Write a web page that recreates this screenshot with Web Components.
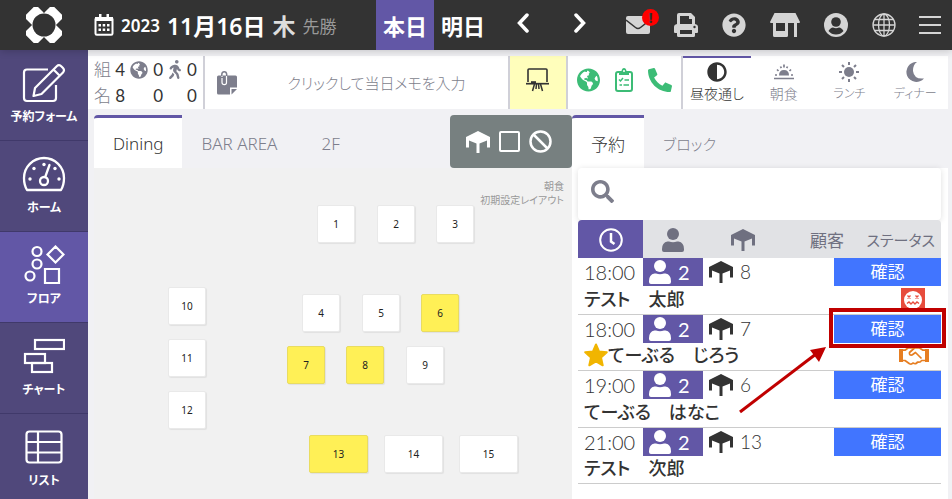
<!DOCTYPE html>
<html lang="ja">
<head>
<meta charset="utf-8">
<title>フロア</title>
<style>
html,body{margin:0;height:100%;overflow:hidden}
body{font-family:"Noto Sans","Noto Sans CJK JP",sans-serif;font-size:16px;color:#333;background:#f1f1f4;
--purple:#6257a6;--deep:#50487b;--grey:#7d7e8c;--green:#3cbc76}
</style>
</head>
<body>
<reservation-app></reservation-app>
<script>
const ICONS={
logo:['0 0 36 36','<g fill="#fff"><rect x="9.500" y="-2" width="17" height="13" rx="2.500" transform="rotate(45 18 18)"/><rect x="9.500" y="-2" width="17" height="13" rx="2.500" transform="rotate(135 18 18)"/><rect x="9.500" y="-2" width="17" height="13" rx="2.500" transform="rotate(225 18 18)"/><rect x="9.500" y="-2" width="17" height="13" rx="2.500" transform="rotate(315 18 18)"/></g><circle cx="18" cy="18" r="11.500" fill="#333"/>'],
calendar:['0 0 20 22','<path d="M1.500 5.500H18.500V19.500Q18.500 20.800 17.200 20.800H2.800Q1.500 20.800 1.500 19.500Z" fill="none" stroke="currentColor" stroke-width="2"/><path fill="currentColor" d="M1 3h18v4H1zM5 0h2.500v4H5zM12.500 0H15v4h-2.500zM4.500 10h2.500v2.500H4.500zM8.700 10h2.500v2.500H8.700zM13 10h2.500v2.500H13zM4.500 14.500h2.500V17H4.500zM8.700 14.500h2.500V17H8.700zM13 14.500h2.500V17H13z"/>'],
left:['0 0 12 20','<path d="M10 2L2.500 10L10 18" fill="none" stroke="currentColor" stroke-width="3.500" stroke-linecap="round"/>'],
right:['0 0 12 20','<path d="M2 2L9.500 10L2 18" fill="none" stroke="currentColor" stroke-width="3.500" stroke-linecap="round"/>'],
mail:['0 0 24 18','<rect width="24" height="18" rx="2" fill="currentColor"/><path d="M0 4L9.500 11.500Q12 13.500 14.500 11.500L24 4" fill="none" stroke="#333" stroke-width="1.500"/>'],
print:['0 0 24 24','<path fill="currentColor" fill-rule="evenodd" d="M3 11V2Q3 0 5 0H17L21 4V11Q24 11.500 24 14V19Q24 20 23 20H21V22.500Q21 24 19.500 24H4.500Q3 24 3 22.500V20H1Q0 20 0 19V14Q0 11.500 3 11ZM6 3V11H18V6H15V3ZM6 17V21H18V17Z"/><circle cx="20.500" cy="14" r="1.200" fill="#333"/>'],
help:['0 0 512 512','<path fill="currentColor" d="M504 256c0 136.997-111.043 248-248 248S8 392.997 8 256C8 119.083 119.043 8 256 8s248 111.083 248 248zM262.655 90c-54.497 0-89.255 22.957-116.549 63.758-3.536 5.286-2.353 12.415 2.715 16.258l34.699 26.31c5.205 3.947 12.621 3.008 16.665-2.122 17.864-22.658 30.113-35.797 57.303-35.797 20.429 0 45.698 13.148 45.698 32.958 0 14.976-12.363 22.667-32.534 33.976C247.128 238.528 216 254.941 216 296v4c0 6.627 5.373 12 12 12h56c6.627 0 12-5.373 12-12v-1.333c0-28.462 83.186-29.647 83.186-106.667 0-58.002-60.165-102-116.531-102zM256 338c-25.365 0-46 20.635-46 46 0 25.364 20.635 46 46 46s46-20.636 46-46c0-25.365-20.635-46-46-46z"/>'],
store:['0 0 30 24','<path fill="currentColor" d="M4.500 0H25.500L30 9Q30 10 29 10H1Q0 10 0 9ZM3 10H6V18H15V10H18V22.500Q18 24 16.500 24H4.500Q3 24 3 22.500ZM24 10H27V24H24Z"/>'],
account:['0 0 24 24','<circle cx="12" cy="12" r="12" fill="currentColor"/><circle cx="12" cy="9" r="4.800" fill="#333"/><path fill="#333" d="M4.500 18Q6.500 14.500 9 14.500Q12 16 15 14.500Q17.500 14.500 19.500 18Q16.500 21.500 12 21.500T4.500 18Z"/>'],
globe:['0 0 24 24','<g fill="none" stroke="currentColor" stroke-width="1.300"><circle cx="12" cy="12" r="11"/><ellipse cx="12" cy="12" rx="5.500" ry="11"/><path d="M12 1V23M1 12H23M3 6.500H21M3 17.500H21"/></g>'],
menu:['0 0 22 18','<path d="M0 1H22M0 9H22M0 17H22" stroke="currentColor" stroke-width="2"/>'],
edit:['0 0 44 40','<g fill="none" stroke="#fff" stroke-width="2.200" stroke-linejoin="round"><path d="M26 6.500H5Q2 6.500 2 9.500V35Q2 38 5 38H31Q34 38 34 35V22"/><path d="M13 25L35 3Q37 1 39.500 3.500L41 5Q43 7 41 9.500L19.500 31L11.500 33ZM31.500 6.500L37.500 12.500"/></g>'],
gauge:['0 0 44 36','<g fill="none" stroke="#fff" stroke-width="2.300"><path d="M5 34Q2 29 2 22A20 20 0 0 1 42 22Q42 29 39 34Z" stroke-linejoin="round"/><circle cx="22" cy="25" r="4"/><path d="M23.200 21L27.500 9" stroke-linecap="round"/></g><g fill="#fff"><circle cx="8" cy="23" r="1.700"/><circle cx="12" cy="12.500" r="1.700"/><circle cx="22" cy="8.500" r="1.700"/><circle cx="33" cy="12.500" r="1.700"/><circle cx="37" cy="23" r="1.700"/></g>'],
floor:['0 0 42 40','<g fill="none" stroke="#fff" stroke-width="2.200"><circle cx="14" cy="6.500" r="4.500"/><circle cx="14" cy="19" r="4.500"/><circle cx="7" cy="31" r="4.500"/><path d="M32.500 1.500L40.500 9.500L32.500 17.500L24.500 9.500ZM22 24H36V38H22Z"/></g>'],
chart:['0 0 42 36','<g fill="none" stroke="#fff" stroke-width="2.200"><rect x="12" y="2" width="29" height="9"/><rect x="2" y="16" width="20" height="9"/><rect x="9" y="25" width="20" height="9"/></g>'],
list:['0 0 38 34','<g fill="none" stroke="#fff" stroke-width="2.200"><rect x="1.500" y="1.500" width="35" height="31" rx="3"/><path d="M13 1V33M1 12H37M1 22.500H37"/></g>'],
earth:['0 0 496 512','<path fill="currentColor" d="M248 8C111.030 8 0 119.030 0 256s111.030 248 248 248 248-111.030 248-248S384.970 8 248 8zm82.290 357.600c-3.900 3.880-7.990 7.950-11.310 11.280-2.990 3-5.100 6.700-6.170 10.710-1.510 5.660-2.730 11.380-4.770 16.870l-17.390 46.850c-13.760 3-28 4.690-42.650 4.690v-27.380c1.690-12.620-7.640-36.260-22.630-51.250-6-6-9.370-14.140-9.370-22.630v-32.010c0-11.640-6.270-22.340-16.460-27.970-14.370-7.950-34.810-19.060-48.810-26.110-11.480-5.780-22.100-13.140-31.650-21.750l-.8-.72a114.792 114.792 0 0 1-18.060-20.740c-9.380-13.770-24.660-36.420-34.590-51.140 20.470-45.500 57.360-82.040 103.200-101.890l24.010 12.010C203.480 89.740 216 82.010 216 70.110v-11.300c7.990-1.290 16.120-2.110 24.390-2.420l28.300 28.300c6.250 6.250 6.250 16.380 0 22.630L264 112l-10.340 10.340c-3.120 3.120-3.120 8.190 0 11.310l4.690 4.690c3.120 3.120 3.120 8.190 0 11.310l-8 8a8.008 8.008 0 0 1-5.660 2.340h-8.990c-2.080 0-4.080.81-5.580 2.270l-9.920 9.650a8.001 8.001 0 0 0-1.580 9.310l15.590 31.190c2.660 5.320-1.210 11.580-7.150 11.580h-5.640c-1.930 0-3.790-.7-5.240-1.960l-9.280-8.060a16.017 16.017 0 0 0-15.550-3.100l-31.170 10.390a11.950 11.950 0 0 0-8.170 11.340c0 4.530 2.560 8.660 6.610 10.690l11.080 5.540c9.410 4.710 19.790 7.160 30.310 7.160s22.590 27.290 32 32h66.750c8.490 0 16.620 3.370 22.630 9.370l13.690 13.690a30.503 30.503 0 0 1 8.930 21.570 46.536 46.536 0 0 1-13.720 32.980zM417 274.250c-5.790-1.450-10.840-5-14.150-9.970l-17.980-26.970a23.970 23.970 0 0 1 0-26.620l19.590-29.380c2.320-3.470 5.500-6.290 9.240-8.150l12.980-6.490C440.200 193.590 448 223.870 448 256c0 8.670-.74 17.160-1.820 25.540L417 274.250z"/>'],
walk:['0 0 320 512','<path fill="currentColor" d="M208 96c26.500 0 48-21.500 48-48S234.500 0 208 0s-48 21.500-48 48 21.500 48 48 48zm94.500 149.100l-23.300-11.800-9.700-29.400c-14.700-44.600-55.700-75.800-102.200-75.900-36-.1-55.900 10.100-93.300 25.200-21.600 8.700-39.300 25.200-49.700 46.200L17.600 213c-7.800 15.800-1.500 35 14.200 42.900 15.600 7.900 34.600 1.500 42.500-14.300L81 228c3.500-7 9.300-12.500 16.500-15.400l26.800-10.800-15.200 60.700c-5.200 20.800.4 42.900 14.900 58.800l59.900 65.400c7.200 7.900 12.300 17.400 14.900 27.700l18.300 73.300c4.300 17.100 21.700 27.600 38.800 23.300 17.100-4.300 27.600-21.700 23.300-38.800l-22.200-89c-2.600-10.300-7.700-19.900-14.900-27.700l-45.500-49.700 17.200-68.700 5.500 16.500c5.300 16.100 16.700 29.400 31.700 37l23.300 11.800c15.600 7.900 34.600 1.500 42.500-14.300 7.700-15.700 1.400-35.100-14.300-43zM73.600 385.800c-3.200 8.100-8 15.400-14.200 21.500l-50 50.100c-12.500 12.500-12.500 32.800 0 45.300s32.700 12.500 45.200 0l59.400-59.400c6.100-6.100 10.900-13.400 14.200-21.500l13.500-33.800c-55.300-60.300-38.700-41.800-47.400-53.700l-20.700 51.500z"/>'],
memo:['0 0 20 24','<path fill="currentColor" d="M1.500 4.500H18.500Q20 4.500 20 6V16.500H13V23.500H1.500Q0 23.500 0 22V6Q0 4.500 1.500 4.500ZM14.500 18H20L14.500 23.500Z"/><path d="M5 6V3.500Q5 1 7.200 1T9.500 3.500V11.500Q9.500 13.700 7.300 13.700T5 11.500V7" fill="none" stroke="#fff" stroke-width="1.200"/><path d="M4.800 5V3.500Q4.800 .8 7.200 .8T9.700 3.500V5" fill="none" stroke="currentColor" stroke-width="1.500"/>'],
board:['0 0 24 24','<g fill="none" stroke="#333"><path d="M2 14V2Q2 1 3 1H20Q21 1 21 2V14" stroke-width="1.600"/><path d="M0 15.700H23" stroke-width="1.700"/><path d="M5 14.300H10" stroke-width="2.200"/><path d="M8.500 16L6.500 23M14.500 16L16.500 23M10.500 16L10 21M12.500 16L13 21" stroke-width="1.500"/></g>'],
clip:['0 0 18 24','<rect x="1" y="4" width="16" height="19" rx="2" fill="none" stroke="currentColor" stroke-width="2"/><path fill="currentColor" d="M4 3H6.500Q7 0 9 0T11.500 3H14V7H4Z"/><circle cx="9" cy="3" r="1" fill="#fff"/><path d="M4 11.500L5.500 13L8 10M9.500 12H14M4.500 17H7M8.500 17H14" fill="none" stroke="currentColor" stroke-width="1.500"/>'],
phone:['0 0 512 512','<path fill="currentColor" transform="matrix(-1 0 0 1 512 0)" d="M493.400 24.600l-104-24c-11.300-2.600-22.900 3.300-27.500 13.900l-48 112c-4.200 9.800-1.400 21.300 6.900 28l60.600 49.600c-36 76.700-98.900 140.500-177.200 177.200l-49.600-60.600c-6.800-8.300-18.200-11.100-28-6.900l-112 48C3.900 366.500-2 378.100.6 389.400l24 104C27.100 504.200 36.700 512 48 512c256.100 0 464-207.500 464-464 0-11.200-7.700-20.900-18.600-23.400z"/>'],
half:['0 0 512 512','<path fill="#333" d="M8 256c0 136.966 111.033 248 248 248s248-111.034 248-248S392.966 8 256 8 8 119.033 8 256zm248 184V72c101.705 0 184 82.311 184 184 0 101.705-82.311 184-184 184z"/>'],
sunrise:['0 0 20 16','<path fill="currentColor" d="M5 11.500Q5 6 10 6T15 11.500Z"/><path d="M0 14.500H20M1 11H3M17 11H19M3 5.500L4.500 7M17 5.500L15.500 7M6.500 2.500L7.300 4.200M13.500 2.500L12.700 4.200M10 .5V3.500" stroke="currentColor" stroke-width="1.700"/>'],
sun:['0 0 20 20','<circle cx="10" cy="10" r="5" fill="currentColor"/><g stroke="currentColor" stroke-width="2"><path d="M10 0V3M10 17V20M0 10H3M17 10H20M3 3L5 5M15 15L17 17M17 3L15 5M5 15L3 17"/></g>'],
moon:['0 0 20 20','<path fill="currentColor" d="M12 0A10 10 0 1 0 19 16.500Q9 17.500 8 9Q7.800 3 12 0Z"/>'],
table:['0 0 24 22','<path fill="currentColor" d="M12 0L24 6V16.500H21V9.500L13.500 12.500V22H10.500V12.500L3 9.500V16.500H0V6Z"/>'],
square:['0 0 21 21','<rect x="1" y="1" width="19" height="19" rx="1" fill="none" stroke="currentColor" stroke-width="2"/>'],
ban:['0 0 23 23','<g fill="none" stroke="currentColor" stroke-width="2.500"><circle cx="11.500" cy="11.500" r="10"/><path d="M4.500 4.500L18.500 18.500"/></g>'],
search:['0 0 512 512','<path fill="currentColor" d="M505 442.700L405.300 343c-4.500-4.500-10.600-7-17-7H372c27.600-35.300 44-79.700 44-128C416 93.100 322.900 0 208 0S0 93.100 0 208s93.100 208 208 208c48.300 0 92.700-16.400 128-44v16.300c0 6.400 2.500 12.500 7 17l99.700 99.700c9.400 9.400 24.600 9.400 33.900 0l28.300-28.300c9.400-9.400 9.400-24.600.1-34zM208 336c-70.700 0-128-57.200-128-128 0-70.700 57.200-128 128-128 70.700 0 128 57.200 128 128 0 70.700-57.200 128-128 128z"/>'],
clock:['0 0 24 24','<g fill="none" stroke="#fff"><circle cx="12" cy="12" r="10.800" stroke-width="2"/><path d="M12 5V13.500L15.500 16" stroke-width="2.500"/></g>'],
person:['0 0 22 24','<circle cx="11" cy="6" r="6" fill="currentColor"/><path fill="currentColor" d="M5.500 13.500H7Q11 15 15 13.500H16.500Q22 14.500 22 21V22Q22 24 20 24H2Q0 24 0 22V21Q0 14.500 5.500 13.500Z"/>'],
sick:['0 0 24 24','<rect width="24" height="24" fill="#e74c3c"/><circle cx="12" cy="12" r="9" fill="#fff"/><path d="M6.500 7.500L9.500 10.500M9.500 7.500L6.500 10.500M14.500 7.500L17.500 10.500M17.500 7.500L14.500 10.500M6 15.500L8 14L10 16L12 14L14 16L16 14L18 15.500" fill="none" stroke="#e74c3c" stroke-width="1.400"/>'],
hands:['0 0 30 18','<path fill="#e67e22" d="M0 2H4V15H0ZM26 2H30V15H26Z"/><g fill="none" stroke="#e67e22" stroke-width="1.700" stroke-linejoin="round"><path d="M4 3.200H6L9 1H20.500L24 3.200H26M4 13.500H6L10.500 16.700Q12.500 17.700 14 16Q17 17.800 18.500 15Q21.500 15.800 22.500 13.500H26"/><path d="M15.500 1L10.500 5.500Q10 8.500 13 8L16.500 5.500L22.500 11.500"/></g>'],
star:['0 0 24 24','<path fill="#f1b500" stroke="#f1b500" stroke-width="2" stroke-linejoin="round" d="M12 1.500L15 8.500L22.800 9.200L17 14.500L18.700 22.300L12 18.300L5.300 22.300L7 14.500L1.200 9.200L9 8.500Z"/>']
};
/* Registers an element whose open shadow root holds the given markup. */
function define(name,css,html){
  customElements.define(name,class extends HTMLElement{
    constructor(){
      super();
      const t=document.createElement('template');
      t.innerHTML='<style>*{box-sizing:border-box}button{font:inherit;color:inherit;border:0;background:none;padding:0;margin:0}input{font:inherit;border:0;background:none;padding:0;outline:0}'+css+'</style>'+(typeof html==='function'?html(this):html);
      this.attachShadow({mode:'open'}).append(t.content.cloneNode(true));
    }
  });
}
const icon=(n,w,h)=>`<ui-icon name="${n}" style="width:${w}px;height:${h}px"></ui-icon>`;
customElements.define('ui-icon',class extends HTMLElement{
  connectedCallback(){
    if(this.shadowRoot)return;
    const [box,body]=ICONS[this.getAttribute('name')];
    this.attachShadow({mode:'open'}).innerHTML='<style>:host{display:inline-block;flex:none}svg{display:block;width:100%;height:100%}</style><svg aria-hidden="true" viewBox="'+box+'">'+body+'</svg>';
  }
});

define('app-header',`
:host{display:flex;align-items:center;height:50px;background:#333;color:#fff;box-shadow:0 1px 8px #0003;position:relative;font-weight:600}
.logo{width:88px;display:flex;justify-content:center}
.date{display:flex;align-items:center;gap:7px;flex:1;padding-left:6px;white-space:nowrap}
.y{font-size:17px}.d{font-size:23px}.w{font-size:23px;color:#ddd}.r{font-size:17px;color:#999;font-weight:400}
.day{height:50px;width:58px;font-size:22px}.on{background:var(--purple)}
.arrows{display:flex;width:122px;padding-left:2px}
.arrows button{width:57px;height:50px}
.tools{display:flex;color:#d5d5d5}
.tools button{height:50px;width:48px;display:flex;align-items:center;justify-content:center;position:relative}
.tools .wide{width:54px}.tools .end{width:44px}
.badge{position:absolute;left:28px;top:9px;width:17px;height:17px;border-radius:9px;background:red;color:#333;font-size:14px;line-height:17px;text-align:center;font-weight:800}
`,`<div class="logo">${icon('logo',36,36)}</div>
<div class="date">${icon('calendar',20,22)}<span class="y">2023</span><span class="d">11月16日</span><span class="w">木</span><span class="r">先勝</span></div>
<button class="day on">本日</button><button class="day">明日</button>
<div class="arrows"><button aria-label="前の日">${icon('left',12,20)}</button><button aria-label="次の日">${icon('right',12,20)}</button></div>
<div class="tools"><button aria-label="メール">${icon('mail',24,18)}<span class="badge">!</span></button><button aria-label="印刷">${icon('print',24,24)}</button><button aria-label="ヘルプ">${icon('help',24,24)}</button><button class="wide" aria-label="店舗">${icon('store',30,24)}</button><button aria-label="アカウント">${icon('account',24,24)}</button><button aria-label="言語">${icon('globe',24,24)}</button><button class="end" aria-label="メニュー">${icon('menu',22,18)}</button></div>`);

define('nav-item',`
:host{display:block;flex:none;border-bottom:1px solid #40396a;background:var(--deep);height:91px}
:host([active]){background:var(--purple)}
a{height:100%;display:flex;flex-direction:column;align-items:center;padding-top:13px;gap:4px;color:#fff;text-decoration:none;font-size:12px;line-height:20px;font-weight:600;font-feature-settings:"palt";white-space:nowrap}
.i{height:40px;display:flex;align-items:center}
`,e=>`<a href="#"><span class="i">${icon(e.getAttribute('icon'),e.getAttribute('w'),e.getAttribute('h'))}</span><slot></slot></a>`);
define('side-nav',`:host{display:flex;flex-direction:column;width:88px;background:var(--deep);overflow:hidden}`,'<slot></slot>');

define('day-bar',`
:host{display:flex;height:53px;background:#fff;color:#333}
:host>*{border-right:2px solid #d0d0d8}
.count{width:117px;display:grid;grid-template-columns:17px 11px 22px 10px 18px 1fr;column-gap:3px;align-items:center;padding:1px 7px 1px 6px;font-size:17px;line-height:25px;font-family:Lato,"Noto Sans CJK JP",sans-serif}
.count span{color:var(--grey);font-weight:300}.count b{font-weight:400;text-align:right}
.count ui-icon{color:var(--grey);justify-self:center}
.memo{flex:1;display:flex;align-items:center;padding:0 12px;gap:20px;color:var(--grey);font-weight:300}
input{flex:1;min-width:0;text-align:center;font-size:15px;font-weight:300;font-feature-settings:"palt";color:var(--grey)}input::placeholder{color:var(--grey)}
.board{width:58px;background:#fffebb}
.links{width:115px;display:flex;align-items:center;justify-content:space-between;padding:0 9px;color:var(--green)}
.meals{width:265px;border:0;display:grid;grid-template-columns:68px 1fr 1fr 1fr}
.meals button{border-top:2px solid transparent;color:var(--grey);font-size:14px;line-height:20px;font-weight:300;font-feature-settings:"palt";display:flex;flex-direction:column;align-items:center;gap:2px;padding-top:4px;white-space:nowrap}
.meals .kana{font-size:12px}
.meals .on{border-color:var(--purple);color:#333}
`,`<div class="count"><span>組</span><b>4</b>${icon('earth',18,18)}<b>0</b>${icon('walk',12,19)}<b>0</b><span>名</span><b>8</b><i></i><b>0</b><i></i><b>0</b></div>
<label class="memo">${icon('memo',20,24)}<input aria-label="当日メモ" placeholder="クリックして当日メモを入力"></label>
<button class="board" aria-label="ボード">${icon('board',24,24)}</button>
<div class="links"><button aria-label="ウェブ">${icon('earth',23,24)}</button><button aria-label="確認リスト">${icon('clip',18,24)}</button><button aria-label="電話">${icon('phone',24,24)}</button></div>
<div class="meals"><button class="on">${icon('half',20,20)}昼夜通し</button><button>${icon('sunrise',20,20)}朝食</button><button class="kana">${icon('sun',20,20)}ランチ</button><button class="kana">${icon('moon',20,20)}ディナー</button></div>`);

define('tab-button',`
:host{display:block}
button{height:53px;padding:0 19px;border-top:3px solid transparent;color:var(--grey);font-size:17px;font-weight:300;font-feature-settings:"palt";white-space:nowrap}
:host([kana]) button{font-size:15px}
:host([active]) button{background:#fff;color:#333;border-color:var(--purple);border-radius:4px 0 0 0}
`,'<button><slot></slot></button>');

define('floor-table',`
:host{position:absolute;left:var(--x);top:var(--y)}
button{width:var(--w,38px);height:38px;background:#fff;border:1px solid #e9e9e9;border-radius:2px;box-shadow:1px 1px 1px #0001;font-size:10px;color:#222}
:host([busy]) button{background:#fff056;border-color:#e9dc60}
`,'<button><slot></slot></button>');
define('floor-plan',`
:host{display:flex;flex-direction:column;min-width:0;padding-left:6px}
nav{display:flex}
.tools{margin-left:auto;width:122px;height:53px;border-radius:4px;background:#778080;color:#fff;display:flex;align-items:center;justify-content:center;gap:9px;padding-right:4px}
.tools button{display:flex}
.plan{flex:1;position:relative;background:#f1f1f1;padding:11px 8px;text-align:right;font-size:10px;line-height:14px;color:#999;font-weight:400;font-feature-settings:"palt"}
`,`<nav><tab-button active>Dining</tab-button><tab-button>BAR AREA</tab-button><tab-button style="margin-left:6px">2F</tab-button>
<div class="tools"><button aria-label="テーブル">${icon('table',24,22)}</button><button aria-label="選択">${icon('square',21,21)}</button><button aria-label="ブロック">${icon('ban',23,23)}</button></div></nav>
<div class="plan">朝食<br>初期設定レイアウト${[[1,224,38],[2,284,38],[3,343,38],[4,209,127],[5,269,127],[6,328,127,1],[7,194,179,1],[8,253,179,1],[9,313,179],[10,75,120],[11,75,172],[12,75,224],[13,216,268,1,59],[14,291,268,0,59],[15,366,268,0,59]].map(t=>`<floor-table ${t[3]?'busy':''} style="--x:${t[1]-1}px;--y:${t[2]-1}px${t[4]?';--w:'+t[4]+'px':''}">${t[0]}</floor-table>`).join('')}</div>`);

const rows=[['18:00',2,8,'テスト　太郎','','sick'],['18:00',2,7,'てーぶる　じろう','star','hands'],['19:00',2,6,'てーぶる　はなこ','',''],['21:00',2,13,'テスト　次郎','','']];
define('reservation-list',`
:host{display:block}
table{width:100%;border-collapse:collapse;table-layout:fixed}
td,th{padding:0}
th{height:38px;background:#e1e2e5;color:#6f7080;font-size:17px;font-weight:400;font-feature-settings:"palt";text-align:right;white-space:nowrap}
th:first-child{background:var(--purple);border-radius:4px 0 0 0}th.c{text-align:center}th:last-child{font-size:15px;padding-right:6px;border-radius:0 4px 0 0}
th ui-icon{vertical-align:middle}
.top td{height:28px;font:400 20px/28px Lato,"Noto Sans CJK JP",sans-serif}
.top .t{padding-left:6px;font-weight:300}
.f{display:flex;align-items:center;gap:7px;height:28px}
.p{background:var(--purple);color:#fff;padding-left:6px}
.n{padding-left:6px;font-weight:300;font-size:19px}
.top button{display:block;width:100%;height:28px;background:#4175ff;color:#fff;font-size:17px;line-height:26px}
.bot td{height:28px;border-bottom:1px solid #ccc;font-size:18px;line-height:24px;font-weight:500;font-feature-settings:"palt"}
.name{padding:0 0 2px 6px;display:flex;align-items:center;white-space:pre;height:27px}
.mark{text-align:right}.mark ui-icon{display:block;margin-left:auto;margin-right:12px}
.mark ui-icon[name=sick]{margin-right:16px}
`,()=>`<table><colgroup><col style="width:65px"><col style="width:60px"><col><col style="width:52px"><col style="width:10px"><col style="width:97px"></colgroup>
<thead><tr><th class="c" aria-label="時間">${icon('clock',24,24)}</th><th class="c" aria-label="人数">${icon('person',22,24)}</th><th class="c" aria-label="テーブル">${icon('table',24,22)}</th><th colspan="2">顧客</th><th>ステータス</th></tr></thead>
<tbody>${rows.map(r=>`<tr class="top"><td class="t">${r[0]}</td><td><div class="f p">${icon('person',22,24)}<span>${r[1]}</span></div></td><td colspan="2"><div class="f n">${icon('table',24,22)}<span>${r[2]}</span></div></td><td colspan="2"><button>確認</button></td></tr>
<tr class="bot"><td colspan="4"><div class="name">${r[4]?icon('star',24,24):''}<span>${r[3]}</span></div></td><td colspan="2" class="mark">${r[5]?icon(r[5],r[5]==='sick'?24:30,r[5]==='sick'?24:18):''}</td></tr>`).join('')}</tbody></table>`);

define('callout-arrow',`
:host{position:absolute;top:193px;right:2px;width:210px;height:108px;pointer-events:none}
svg{display:block;width:100%;height:100%}
`,`<svg viewBox="0 0 210 108"><rect x="95" y="2" width="113" height="36" fill="none" stroke="#c00000" stroke-width="4"/><path d="M4 104L80 46" stroke="#c00000" stroke-width="3"/><path d="M90 39L74 42L83 54Z" fill="#c00000"/></svg>`);

define('reservation-panel',`
:host{display:flex;flex-direction:column;position:relative;min-width:0}
nav{display:flex}
.body{flex:1;background:#fff;padding:0 7px 0 6px}
label{display:flex;align-items:center;gap:10px;height:52px;padding:0 13px 5px;border-radius:4px;box-shadow:0 1px 6px #0002;color:var(--grey)}
label input{flex:1;min-width:0}
`,`<nav><tab-button active>予約</tab-button><tab-button kana>ブロック</tab-button></nav>
<div class="body"><label>${icon('search',23,23)}<input type="search" aria-label="検索"></label><reservation-list></reservation-list></div><callout-arrow></callout-arrow>`);

define('reservation-app',`
:host{display:flex;flex-direction:column;height:100vh}
.shell{flex:1;min-height:0;display:flex}
main{flex:1;min-width:0;display:flex;flex-direction:column;padding:6px 4px 0 0;gap:6px}
.split{flex:1;min-height:0;display:grid;grid-template-columns:484fr 376fr}
app-header{z-index:1}
`,`<app-header></app-header><div class="shell"><side-nav><nav-item icon="edit" w="44" h="40">予約フォーム</nav-item><nav-item icon="gauge" w="44" h="36">ホーム</nav-item><nav-item icon="floor" w="42" h="40" active>フロア</nav-item><nav-item icon="chart" w="42" h="36">チャート</nav-item><nav-item icon="list" w="38" h="34">リスト</nav-item></side-nav>
<main><day-bar></day-bar><div class="split"><floor-plan></floor-plan><reservation-panel></reservation-panel></div></main></div>`);
</script>
</body>
</html>
